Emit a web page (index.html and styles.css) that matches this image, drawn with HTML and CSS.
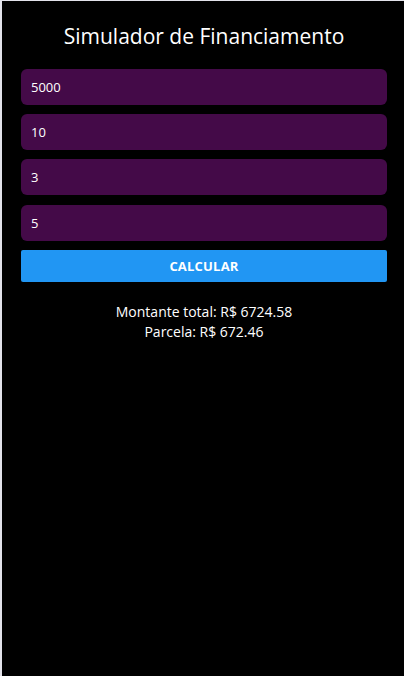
FILE: index.html
```html
<!DOCTYPE html>
<html lang="pt-BR">
<head>
<meta charset="utf-8">
<title>Simulador de Financiamento</title>
<link rel="stylesheet" href="styles.css">
</head>
<body>
<div class="screen">
  <h1 class="title">Simulador de Financiamento</h1>
  <div class="form">
    <input class="field" type="text" value="5000">
    <input class="field" type="text" value="10">
    <input class="field" type="text" value="3">
    <input class="field" type="text" value="5">
    <button class="btn" type="button">CALCULAR</button>
  </div>
  <div class="result">
    <p>Montante total: R$ 6724.58</p>
    <p>Parcela: R$ 672.46</p>
  </div>
</div>
</body>
</html>
```

FILE: styles.css
```css
html, body {
  margin: 0;
  padding: 0;
  height: 100%;
}
body {
  background: #e2e2ea;
  font-family: "Open Sans", "Noto Sans", sans-serif;
  color: #fff;
}
.screen {
  margin: 1px 0 0 2px;
  height: calc(100% - 1px);
  background: #000;
  padding: 19px 17px 0 19px;
  box-sizing: border-box;
}
.title {
  margin: 0 0 17px;
  font-size: 21px;
  line-height: 32px;
  font-weight: 400;
  text-align: center;
}
.form {
  display: flex;
  flex-direction: column;
  gap: 9.2px;
}
.field {
  height: 36px;
  box-sizing: border-box;
  border: none;
  border-radius: 6px;
  background: #440a48;
  color: #fff;
  font-family: inherit;
  font-size: 13px;
  padding: 0 10px;
  outline: none;
}
.btn {
  height: 32px;
  border: none;
  border-radius: 2px;
  background: #2196f3;
  color: #fff;
  font-family: inherit;
  font-weight: 700;
  font-size: 13px;
  letter-spacing: 0.2px;
}
.result {
  margin-top: 20px;
  text-align: center;
  font-size: 14px;
  line-height: 20px;
}
.result p {
  margin: 0;
}
```
